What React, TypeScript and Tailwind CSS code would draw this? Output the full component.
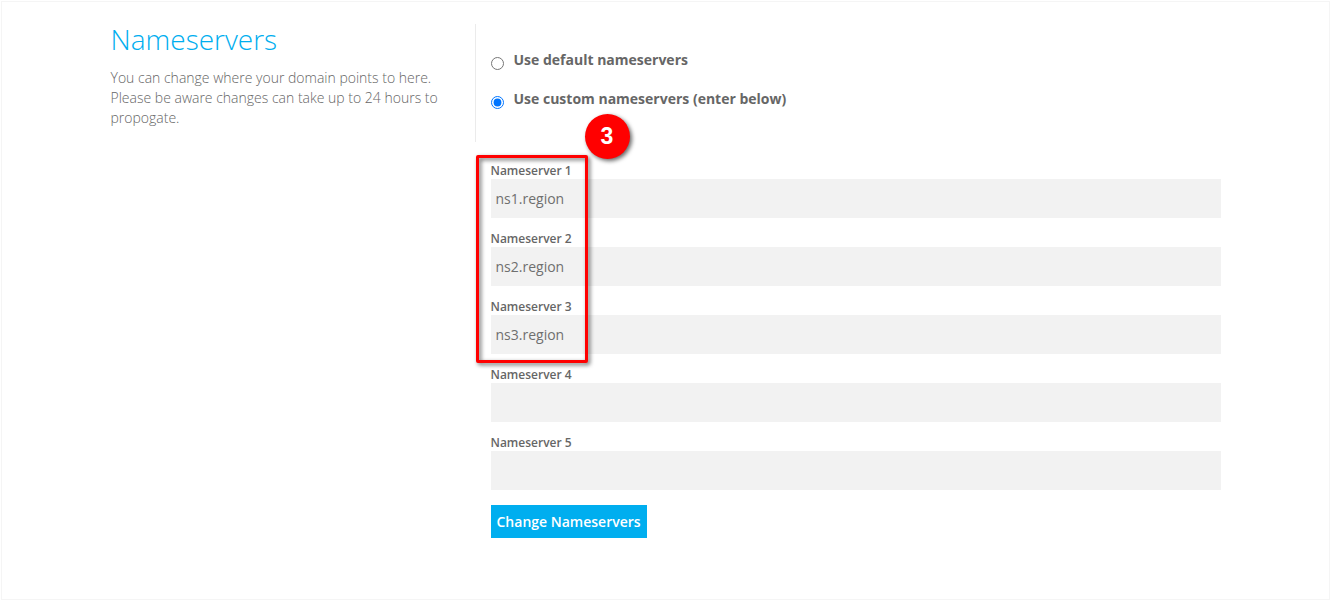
import { useState } from 'react';

type ModeOption = { value: string; label: string };
type Field = { id: string; label: string; value: string };

const modes: ModeOption[] = [
  { value: 'default', label: 'Use default nameservers' },
  { value: 'custom', label: 'Use custom nameservers (enter below)' },
];

const filledFields: Field[] = [
  { id: 'ns1', label: 'Nameserver 1', value: 'ns1.region' },
  { id: 'ns2', label: 'Nameserver 2', value: 'ns2.region' },
  { id: 'ns3', label: 'Nameserver 3', value: 'ns3.region' },
];

const emptyFields: Field[] = [
  { id: 'ns4', label: 'Nameserver 4', value: '' },
  { id: 'ns5', label: 'Nameserver 5', value: '' },
];

function NameserverField({ field }: { field: Field }) {
  return (
    <div className="flex flex-col">
      <label htmlFor={field.id} className="text-[12px] leading-[17px] font-semibold text-[#666666]">
        {field.label}
      </label>
      <input
        id={field.id}
        type="text"
        defaultValue={field.value}
        className="h-[39px] w-full bg-[#f2f2f2] px-[5px] text-[14px] text-[#6f6f6f] outline-none"
      />
    </div>
  );
}

function Highlight() {
  return (
    <div className="pointer-events-none absolute -top-[7px] -bottom-[9px] -left-[15px] w-[112px]">
      <div className="h-full rounded-[2px] border-3 border-[#ff0000] drop-shadow-[2px_2px_2px_rgba(0,0,0,0.6)]" />
      <div className="absolute -top-[41px] left-[109px] flex size-[45px] items-center justify-center rounded-full bg-[#ff0000] font-['Liberation_Sans',sans-serif] text-[23px] font-bold text-white shadow-[2px_2px_4px_rgba(0,0,0,0.6)]">
        3
      </div>
    </div>
  );
}

export default function App() {
  const [mode, setMode] = useState('custom');

  return (
    <div className="min-h-screen bg-white p-px font-['Open_Sans',sans-serif] text-[#666666]">
      <main className="min-h-[calc(100vh-2px)] border border-[#f5f5f5] pt-[22px] pb-15">
        <div className="mx-auto flex max-w-[1140px] items-start">
          <section className="w-1/3 border-r border-[#ebebeb] px-[15px] pb-[14px]">
            <h1 className="mb-[14px] text-[28px] leading-[30px] font-light text-[#00aeef]">Nameservers</h1>
            <p className="text-[14px] leading-[20px] font-light">
              You can change where your domain points to here. Please be aware changes can take up to 24 hours to
              propogate.
            </p>
          </section>

          <form className="w-2/3 px-[15px] pt-[26px]" onSubmit={(e) => e.preventDefault()}>
            <fieldset aria-label="Nameserver type" className="mb-[53px] flex flex-col gap-[19px]">
              {modes.map((option) => (
                <label key={option.value} className="flex items-start gap-[10px] text-[14px] leading-[20px] font-bold">
                  <input
                    type="radio"
                    name="mode"
                    value={option.value}
                    checked={mode === option.value}
                    onChange={() => setMode(option.value)}
                    className="mt-[7px] size-[13px]"
                  />
                  {option.label}
                </label>
              ))}
            </fieldset>

            <div className="flex flex-col gap-3">
              <div className="relative flex flex-col gap-3">
                {filledFields.map((field) => (
                  <NameserverField key={field.id} field={field} />
                ))}
                <Highlight />
              </div>
              {emptyFields.map((field) => (
                <NameserverField key={field.id} field={field} />
              ))}
            </div>

            <button
              type="submit"
              className="mt-[15px] h-[33px] bg-[#00aeef] px-[6px] text-[14px] font-semibold text-white"
            >
              Change Nameservers
            </button>
          </form>
        </div>
      </main>
    </div>
  );
}
